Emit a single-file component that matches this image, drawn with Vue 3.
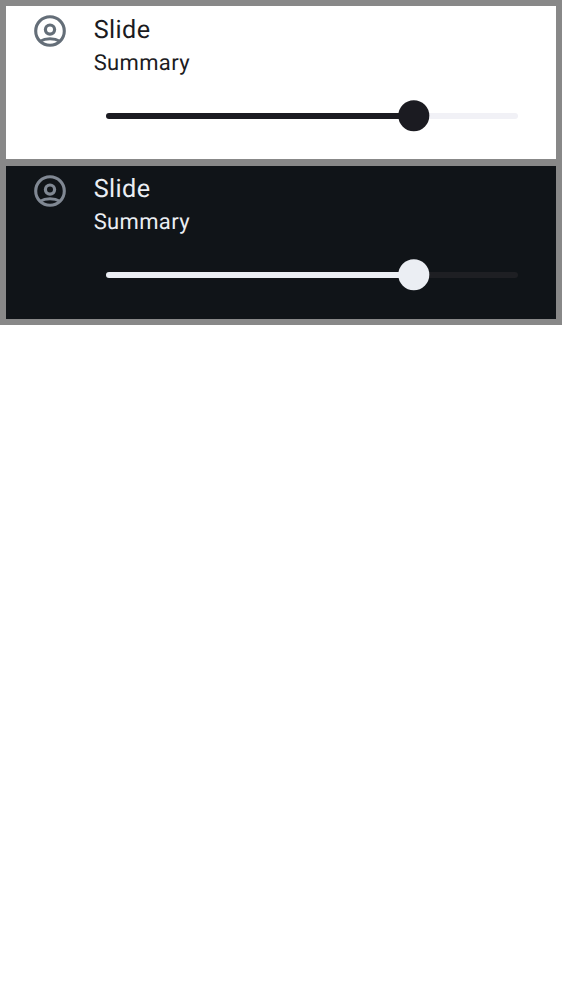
<script setup>
const themes = ['light', 'dark']
const value = 75
</script>

<template>
  <main class="board">
    <section v-for="theme in themes" :key="theme" class="panel" :class="theme">
      <svg class="icon" viewBox="0 0 32 32" fill="none" stroke="currentColor">
        <circle cx="16" cy="16" r="14.3" stroke-width="3.1" />
        <circle cx="16" cy="14.6" r="4.6" stroke-width="3.2" />
        <path d="M6.2 26.2C9 24.5 12.3 23.8 16 23.8s7 .7 9.8 2.4" stroke-width="2.9" />
      </svg>
      <div class="content">
        <div class="title">Slide</div>
        <div class="summary">Summary</div>
        <div class="slider">
          <div class="active" :style="{ width: value + '%' }"></div>
          <div class="thumb" :style="{ left: value + '%' }"></div>
        </div>
      </div>
    </section>
  </main>
</template>

<style>
body {
  background: #fff;
}
</style>

<style scoped>
.board {
  box-sizing: border-box;
  width: 562px;
  height: 325px;
  padding: 6px;
  background: #888;
  display: grid;
  grid-template-rows: 153.4px 153.4px;
  row-gap: 6.2px;
  font-family: Roboto, sans-serif;
  text-rendering: geometricPrecision;
}
.panel {
  display: flex;
  padding-left: 28px;
}
.light {
  --text-top: 6px;
  background: #fff;
  color: #1b1b21;
  --icon: #646e78;
  --track: #f1f1f6;
}
.dark {
  --text-top: 5px;
  background: #101418;
  color: #ebeef3;
  --icon: #808893;
  --track: #1e1f23;
}
.icon {
  width: 32px;
  height: 32px;
  margin: 9.1px 27.7px 0 0;
  color: var(--icon);
  flex: none;
}
.content {
  flex: 1;
  padding-top: var(--text-top);
}
.title {
  font-size: 25.2px;
  line-height: 38px;
  letter-spacing: 0.4px;
}
.summary {
  font-size: 22px;
  line-height: 28px;
  letter-spacing: 0.35px;
}
.slider {
  position: relative;
  width: 412px;
  height: 6px;
  margin: calc(40.5px - var(--text-top)) 0 0 12.3px;
  border-radius: 3px;
  background: var(--track);
}
.active {
  height: 100%;
  border-radius: 3px;
  background: currentColor;
}
.thumb {
  position: absolute;
  top: 50%;
  width: 31.4px;
  height: 31.4px;
  border-radius: 50%;
  background: currentColor;
  transform: translate(-50%, -50%);
  margin-left: -1.2px;
}
</style>
